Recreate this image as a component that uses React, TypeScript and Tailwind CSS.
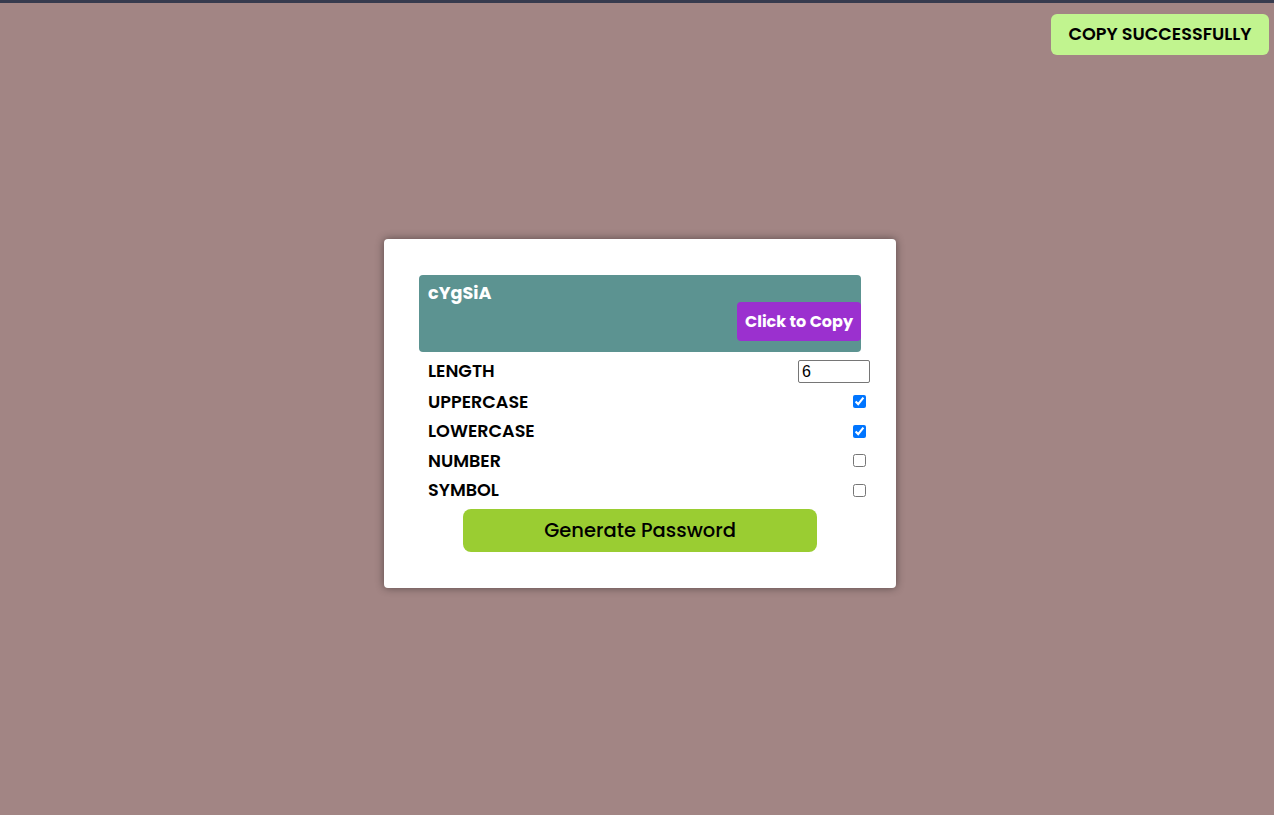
import React from "react";

const font = { fontFamily: '"Poppins", "Open Sans", "Noto Sans", sans-serif' };

function Row({ label, checked }: { label: string; checked: boolean }) {
  return (
    <div className="flex items-center justify-between h-[29.5px] pl-[9px] -mr-[9px]">
      <span className="text-[17.6px] font-semibold text-black">{label}</span>
      <input type="checkbox" defaultChecked={checked} className="w-[13px] h-[13px] my-0 ml-0 mr-[4px]" />
    </div>
  );
}

export default function App() {
  return (
    <div style={font} className="w-full h-[815px] bg-[#a28584] flex flex-col relative">
      <div className="h-[3px] w-full bg-[#373b4e]" />
      <div className="absolute top-[14px] right-[5px] w-[218px] h-[41px] rounded-[6px] bg-[#c1f48f] flex items-center justify-center text-[17.6px] font-semibold text-black">
        COPY SUCCESSFULLY
      </div>
      <div className="flex-1 flex items-start justify-center pt-[236px] pl-[6px]">
        <div className="w-[512px] h-[349px] bg-white rounded-[4px] shadow-[0_0_8px_rgba(0,0,0,0.45)] pt-[36px] px-[35px]">
          <div className="h-[77px] bg-[#5c9391] rounded-[4px] flex flex-col pl-[9px] pt-[6px]">
            <span className="text-[17.6px] font-bold text-white leading-[24px]">cYgSiA</span>
            <div className="flex justify-end -mt-[3px]">
              <button className="w-[124px] h-[39px] bg-[#9b30cf] rounded-[4px] text-white text-[16px] font-bold">
                Click to Copy
              </button>
            </div>
          </div>
          <div className="flex items-center justify-between h-[38px] pl-[9px] -mr-[9px] pt-[1px]">
            <span className="text-[17.6px] font-semibold text-black">LENGTH</span>
            <input
              type="number"
              defaultValue={6}
              className="w-[72px] h-[23px] border border-[#767676] rounded-[2px] px-[3px] text-[16px] leading-[21px] text-black"
              style={{ fontFamily: '"Liberation Sans", Arial, sans-serif', appearance: "textfield" }}
            />
          </div>
          <div className="-mt-[3px]">
            <Row label="UPPERCASE" checked={true} />
            <Row label="LOWERCASE" checked={true} />
            <Row label="NUMBER" checked={false} />
            <Row label="SYMBOL" checked={false} />
          </div>
          <div className="flex justify-center mt-[4px]">
            <button className="w-[354px] h-[43px] rounded-[8px] bg-[#9acd32] text-[19.5px] font-medium text-black">
              Generate Password
            </button>
          </div>
        </div>
      </div>
    </div>
  );
}
